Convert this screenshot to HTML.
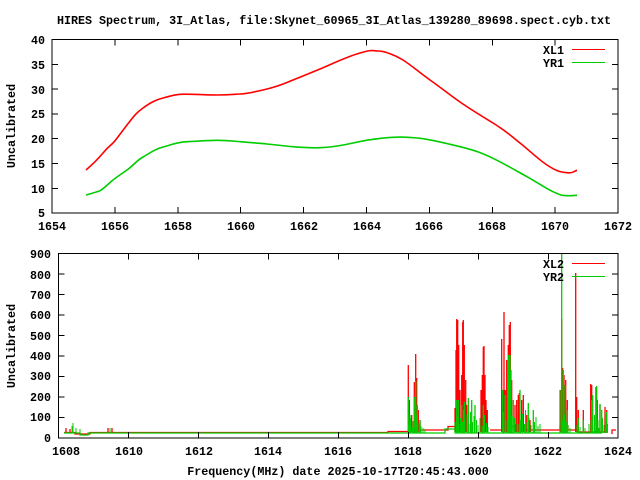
<!DOCTYPE html>
<html><head><meta charset="utf-8"><style>
html,body{margin:0;padding:0;background:#fff;}
svg{display:block;}
text{font-family:"Liberation Mono",monospace;font-weight:bold;font-size:11.7px;fill:#000;}
</style></head><body>
<svg width="640" height="480" viewBox="0 0 640 480" xmlns="http://www.w3.org/2000/svg">
<text x="334" y="24" text-anchor="middle">HIRES Spectrum, 3I_Atlas, file:Skynet_60965_3I_Atlas_139280_89698.spect.cyb.txt</text>

<!-- Plot 1 -->
<g stroke="#000" stroke-width="1" fill="none" shape-rendering="crispEdges">
<rect x="52" y="39.5" width="566" height="173.5"/>
<path d="M52 64.3h6M52 89.1h6M52 113.9h6M52 138.7h6M52 163.5h6M52 188.3h6
M618 64.3h-6M618 89.1h-6M618 113.9h-6M618 138.7h-6M618 163.5h-6M618 188.3h-6
M114.9 213v-6M177.8 213v-6M240.7 213v-6M303.6 213v-6M366.5 213v-6M429.4 213v-6M492.3 213v-6M555.2 213v-6
M114.9 39.5v6M177.8 39.5v6M240.7 39.5v6M303.6 39.5v6M366.5 39.5v6M429.4 39.5v6M492.3 39.5v6M555.2 39.5v6"/>
</g>
<g text-anchor="end">
<text x="45" y="44">40</text><text x="45" y="69">35</text><text x="45" y="94">30</text><text x="45" y="118">25</text>
<text x="45" y="143">20</text><text x="45" y="168">15</text><text x="45" y="193">10</text><text x="45" y="217">5</text>
</g>
<g text-anchor="middle">
<text x="52" y="230">1654</text><text x="115" y="230">1656</text><text x="178" y="230">1658</text><text x="241" y="230">1660</text>
<text x="304" y="230">1662</text><text x="367" y="230">1664</text><text x="429" y="230">1666</text><text x="492" y="230">1668</text>
<text x="555" y="230">1670</text><text x="618" y="230">1672</text>
</g>
<text transform="translate(15,126) rotate(-90)" text-anchor="middle">Uncalibrated</text>
<path fill="none" stroke="#f00" stroke-width="1.6" d="M86 170C93 164 98 159 103 153S110 146 113 143S120 134 127 125S136 113 143 108S155 100 163 98S172 95 180 94.3S205 95 217 95S232 94.5 240 94S255 92 267 89S283 84 293 80S308 74 320 69S346 57 360 53S372 51 378 51S395 55 403 60S420 73 430 80S450 95 460 102S480 115 493 123S510 135 520 143S538 159 547 165S560 172 567 172.7S574 171 577 170.3"/>
<path fill="none" stroke="#0c0" stroke-width="1.6" d="M86 195C93 193 97 192 100 190.7S108 184 113 180S120 175 127 170S136 161 143 157S155 149 163 147S177 142 187 141.7S206 140.3 217 140.3S232 141 240 141.7S257 143 267 144S285 146 293 146.7S310 148 320 147.7S340 146 353 143S380 138 393 137.3S411 137.5 420 138.3S445 143 460 146.7S482 153 493 158.3S515 170 527 176.7S545 188 553 191.7S562 195.5 567 195.7S575 195.3 577 195.3"/>
<text x="564" y="54" text-anchor="end">XL1</text>
<line x1="572" y1="49.5" x2="605" y2="49.5" stroke="#f00" stroke-width="1"/>
<text x="564" y="67" text-anchor="end">YR1</text>
<line x1="572" y1="62.5" x2="605" y2="62.5" stroke="#0c0" stroke-width="1"/>

<!-- Plot 2 -->
<g text-anchor="end">
<text x="51" y="258">900</text><text x="51" y="279">800</text><text x="51" y="299">700</text><text x="51" y="319">600</text>
<text x="51" y="340">500</text><text x="51" y="360">400</text><text x="51" y="380">300</text><text x="51" y="401">200</text>
<text x="51" y="421">100</text><text x="51" y="442">0</text>
</g>
<g text-anchor="middle">
<text x="66" y="455">1608</text><text x="129" y="455">1610</text><text x="199" y="455">1612</text><text x="268" y="455">1614</text>
<text x="338" y="455">1616</text><text x="408" y="455">1618</text><text x="478" y="455">1620</text><text x="548" y="455">1622</text>
<text x="618" y="455">1624</text>
</g>
<text transform="translate(15,346) rotate(-90)" text-anchor="middle">Uncalibrated</text>
<text x="338" y="475" text-anchor="middle">Frequency(MHz) date 2025-10-17T20:45:43.000</text>

<!-- red data -->
<g stroke="#f00" stroke-width="1.3" fill="none">
<path d="M64 432.5H75V434H90V432.5H388V431.5H408"/>
<path d="M66 428v5M70 429v4M108 428v5M112 428v5M408 430h40v-3.5h7v3.5h5M490 430h22v-4h12v4h36v-4h8v4h10v2h30"/>
<path d="M408.3 432V365M409.3 432V400M411.7 432V415M414.3 432V382M415.7 432V354M416.7 432V378M418.3 432V410M420 432V420
M455 432V408M456 432V350M456.7 432V319M457.7 432V320M458.7 432V345M460 432V390M461.7 432V375M462.7 432V322M463.3 432V320M464.3 432V345M465.7 432V380M466.7 432V405
M481 432V390M482.3 432V375M483.3 432V347M484 432V346M485 432V375M486 432V400M487.3 432V410
M501.7 432V339M502.7 432V390M504 432V312M505.3 432V390M506.7 432V360M508.3 432V345M509.3 432V325M510.3 432V322M511.7 432V380M515 432V405M516.7 432V400M518.3 432V395M519.3 432V393M521.7 432V400M523.3 432V395M526.7 432V415M530 432V420
M560.7 432V390M561.7 432V319M562.7 432V368M564 432V375M565.7 432V380M567.3 432V400M575.7 432V273M576.7 432V397M578.3 432V410M583.3 432V410M590.7 432V384M591.7 432V385M596 432V387M597.3 432V400M600 432V405M605 432V407M606.7 432V410M612 434V430h4"/>
</g>
<!-- green data -->
<g stroke="#0c0" stroke-width="1" fill="none">
<path stroke-width="1.3" d="M64 433H80v2h8v-2H445v-4h10v4H602"/>
<path d="M73 433V423M72 433v-7M76 433v-5M80 433v-4M110 433v-5"/>
<path d="M409 433V425M410.5 433V418M412 433V427M413 433V421M416.5 433V415M419 433V423M421 433V426M423 433V428M425 433V429
M455 433V422M457 433V416M459 433V424M460.5 433V418M462.5 433V422M463.5 433V410M465 433V420M467 433V414M469 433V424M470.5 433V412M472.5 433V422M474 433V416M476.5 433V420M478 433V425M480 433V418M482 433V426M484.5 433V415M486.5 433V423M488 433V427
M503.5 433V412M506 433V420M509.5 433V405M512 433V416M514.5 433V418M516 433V424M517.5 433V412M519 433V424M521 433V420M522.5 433V414M524.5 433V424M525.5 433V410M527 433V422M529 433V418M531 433V425M534.5 433V422M536 433V417M538 433V426M540 433V424
M562.5 433V420M564 433V415M566 433V422M568 433V425M570 433V428M577 433V425M580 433V427M585 433V428
M589 433V424M591 433V420M593 433V426M594.5 433V415M598 433V420M599 433V428M602.5 433V418M604 433V425M605.5 433V414M607.5 433V424"/>
<path stroke-width="1.3" d="M408.3 433V397M410 433V415M414.3 433V397M415.7 433V381M417.3 433V405M420 433V420
M456.7 433V400M458.3 433V400M461.7 433V405M464.3 433V402M468.3 433V398M471.7 433V400M475 433V405M483.3 433V405
M502.7 433V390M505 433V395M507.7 433V362M508.7 433V355M510 433V355M511 433V370M513.3 433V400M520 433V390M528.3 433V403M533.3 433V410
M560 433V390M561.7 433V254M563.3 433V370M565 433V385M567.3 433V410M578.3 433V418M583.3 433V420M591.7 433V400M592.7 433V395M596.7 433V386M600 433V404M601.7 433V410M606.7 433V412"/>
</g>
<g stroke="#000" stroke-width="1" fill="none" shape-rendering="crispEdges">
<rect x="58.5" y="253.5" width="559.5" height="184.5"/>
<path d="M58.5 274h6M58.5 294.5h6M58.5 315h6M58.5 335.5h6M58.5 356h6M58.5 376.5h6M58.5 397h6M58.5 417.5h6
M618 274h-6M618 294.5h-6M618 315h-6M618 335.5h-6M618 356h-6M618 376.5h-6M618 397h-6M618 417.5h-6
M128.5 438v-6M198.5 438v-6M268.5 438v-6M338.5 438v-6M408.5 438v-6M478.5 438v-6M548.5 438v-6
M128.5 253.5v6M198.5 253.5v6M268.5 253.5v6M338.5 253.5v6M408.5 253.5v6M478.5 253.5v6M548.5 253.5v6"/>
</g>
<text x="564" y="268" text-anchor="end">XL2</text>
<line x1="572" y1="263.5" x2="605" y2="263.5" stroke="#f00" stroke-width="1"/>
<text x="564" y="281" text-anchor="end">YR2</text>
<line x1="572" y1="276.5" x2="605" y2="276.5" stroke="#0c0" stroke-width="1"/>
</svg>
</body></html>
